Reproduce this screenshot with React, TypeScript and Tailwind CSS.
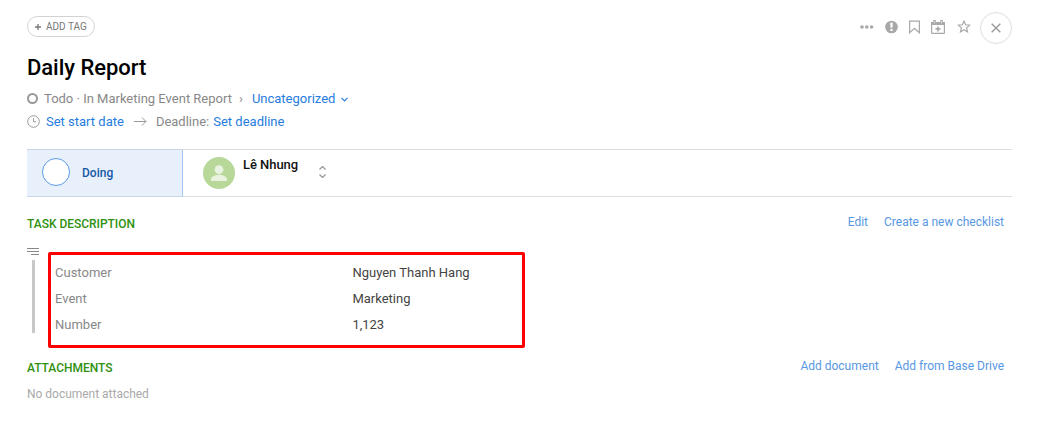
import type { ReactNode } from "react";

const fields = [
    { label: "Customer", value: "Nguyen Thanh Hang" },
    { label: "Event", value: "Marketing" },
    { label: "Number", value: "1,123" },
];

function Actions() {
    return (
        <div className="flex h-8 items-center text-[#a8a8a8]">
            <svg
                className="mb-0.5"
                width="14"
                height="4"
                viewBox="0 0 14 4"
                fill="currentColor"
            >
                <circle cx="2" cy="2" r="1.8" />
                <circle cx="6.8" cy="2" r="1.8" />
                <circle cx="11.6" cy="2" r="1.8" />
            </svg>
            <svg
                className="mb-0.5 ml-[11px]"
                width="13"
                height="14"
                viewBox="0 0 13 14"
            >
                <circle cx="6.5" cy="7" r="6.3" fill="currentColor" />
                <path d="M5.2 2.8h2.6l-.4 5H5.6z" fill="#fff" />
                <rect x="5.4" y="8.9" width="2.2" height="2.1" fill="#fff" />
            </svg>
            <svg
                className="mb-0.5 ml-[11px]"
                width="11"
                height="14"
                viewBox="0 0 11 14"
                fill="none"
                stroke="currentColor"
                strokeWidth="1.2"
            >
                <path d="M.6 1.2h9.8v11.6L5.5 8.3.6 12.8z" />
            </svg>
            <svg
                className="mb-0.5 ml-[11px]"
                width="14"
                height="14"
                viewBox="0 0 14 14"
                fill="none"
                stroke="currentColor"
            >
                <rect
                    x=".6"
                    y="2.6"
                    width="12.8"
                    height="10.8"
                    rx=".6"
                    strokeWidth="1.2"
                />
                <path d="M0 2h14v3H0z" fill="currentColor" stroke="none" />
                <path d="M3.5 0v3.6M10.5 0v3.6" strokeWidth="2.6" />
                <path
                    d="M3.5 1v2.4M10.5 1v2.4"
                    stroke="#fff"
                    strokeWidth=".6"
                />
                <path d="M7 6.4v5M4.5 8.9h5" strokeWidth="1.6" />
            </svg>
            <svg
                className="mb-[3px] ml-3"
                width="14"
                height="13"
                viewBox="0 0 14 13"
                fill="none"
                stroke="currentColor"
                strokeWidth="1.2"
                strokeLinejoin="miter"
            >
                <path d="M7 1.2l1.6 3.6 4.1.4-3.1 2.7.9 4L7 9.8l-3.5 2.1.9-4-3.1-2.7 4.1-.4z" />
            </svg>
            <button className="ml-[9px] flex size-8 items-center justify-center rounded-full border border-[#dedede]">
                <svg
                    width="10"
                    height="10"
                    viewBox="0 0 10 10"
                    stroke="#999"
                    strokeWidth="1.4"
                >
                    <path d="M.7.7l8.6 8.6M9.3.7L.7 9.3" />
                </svg>
            </button>
        </div>
    );
}

function SectionHeading({
    title,
    children,
}: {
    title: string;
    children: ReactNode;
}) {
    return (
        <div className="flex h-[23px] items-center justify-between pr-2">
            <h2 className="text-[12px] font-medium tracking-[-0.03px] text-[#2f910f]">
                {title}
            </h2>
            <div className="-mt-[3px] flex gap-4 text-[12px] text-[#5897e2]">
                {children}
            </div>
        </div>
    );
}

export default function App() {
    return (
        <main className="h-[426px] w-[1038px] overflow-hidden bg-white pt-3 pr-[26px] pl-[27px] font-['Roboto',sans-serif] text-[13px] text-[#888]">
            <header className="flex items-start justify-between">
                <button className="mt-1 flex h-[21px] w-[68px] items-center rounded-full border border-[#d2d2d2] pl-[7px] text-[10px] text-[#777]">
                    <svg
                        className="mr-[5px]"
                        width="6"
                        height="6"
                        viewBox="0 0 6 6"
                        stroke="#777"
                        strokeWidth="1.3"
                    >
                        <path d="M3 0v6M0 3h6" />
                    </svg>
                    ADD TAG
                </button>
                <Actions />
            </header>

            <h1 className="mt-[9px] h-[30px] text-[22px] leading-[30px] font-medium tracking-[-0.05px] text-black">
                Daily Report
            </h1>

            <div className="mt-1 flex h-[23px] items-center">
                <span className="mr-1.5 size-[11px] rounded-full border-2 border-[#999]" />
                <span>Todo · In Marketing Event Report</span>
                <span className="ml-[7px]">›</span>
                <a className="ml-[9px] text-[#267cde]">Uncategorized</a>
                <svg
                    className="mt-0.5 ml-1.5"
                    width="7"
                    height="5"
                    viewBox="0 0 7 5"
                    fill="none"
                    stroke="#267cde"
                    strokeWidth="1.2"
                >
                    <path d="M.5.8l3 3 3-3" />
                </svg>
            </div>
            <div className="flex h-[23px] items-center">
                <svg
                    className="mr-1.5"
                    width="13"
                    height="13"
                    viewBox="0 0 13 13"
                    fill="none"
                    stroke="#999"
                >
                    <circle cx="6.5" cy="6.5" r="5.8" />
                    <path d="M6.5 3.2v3.6H9" />
                </svg>
                <a className="text-[#267cde]">Set start date</a>
                <svg
                    className="ml-2.5"
                    width="13"
                    height="9"
                    viewBox="0 0 13 9"
                    fill="none"
                    stroke="#999"
                >
                    <path d="M0 4.5h12M8 .5l4 4-4 4" />
                </svg>
                <span className="ml-[9px]">Deadline:</span>
                <a className="ml-1 text-[#267cde]">Set deadline</a>
            </div>

            <div className="mt-4 flex h-12 border-y border-[#dedede]">
                <div className="-my-px flex w-[156px] items-center border-y border-r border-[#c8d5e8] border-r-[#a5c8f0] bg-[#e8f0fc] pl-[15px] text-[12px] font-medium text-[#1658a5]">
                    <span className="mr-3 -mt-0.5 size-7 rounded-full border border-[#5b9ae8] bg-white" />
                    Doing
                </div>
                <div className="flex items-center pl-5">
                    <svg width="32" height="32" viewBox="0 0 32 32">
                        <circle cx="16" cy="16" r="16" fill="#b8d89a" />
                        <circle cx="16" cy="12.6" r="4.4" fill="#e8f2de" />
                        <path
                            d="M8 24v-1.6c0-3 4.6-4.6 8-4.6s8 1.6 8 4.6V24z"
                            fill="#e8f2de"
                        />
                    </svg>
                    <span className="mb-4 ml-2 font-medium tracking-[-0.05px] text-[#111]">
                        Lê Nhung
                    </span>
                    <svg
                        className="mb-0.5 ml-[21px]"
                        width="7"
                        height="12"
                        viewBox="0 0 7 12"
                        fill="none"
                        stroke="#999"
                        strokeWidth="1.3"
                    >
                        <path d="M.5 3.5l3-3 3 3M.5 8.5l3 3 3-3" />
                    </svg>
                </div>
            </div>

            <section className="mt-[15px]">
                <SectionHeading title="TASK DESCRIPTION">
                    <a>Edit</a>
                    <a>Create a new checklist</a>
                </SectionHeading>
                <div className="flex">
                    <div className="w-[21px] pt-[13px]">
                        <div className="flex w-3 flex-col items-end gap-0.5">
                            <span className="h-px w-3 bg-[#888]" />
                            <span className="h-px w-3 bg-[#888]" />
                            <span className="h-px w-2 bg-[#888]" />
                        </div>
                        <div className="mt-[5px] ml-[5px] h-[73px] w-[3px] bg-[#c8c8c8]" />
                    </div>
                    <div className="mt-[17px] h-24 w-[477px] rounded-[2px] border-3 border-[#fe0000] pt-[5px] pl-1">
                        {fields.map((field) => (
                            <div
                                className="flex h-[26px] items-center"
                                key={field.label}
                            >
                                <span className="w-[297.4px]">
                                    {field.label}
                                </span>
                                <span className="text-[#444]">
                                    {field.value}
                                </span>
                            </div>
                        ))}
                    </div>
                </div>
            </section>

            <section className="mt-2">
                <SectionHeading title="ATTACHMENTS">
                    <a>Add document</a>
                    <a>Add from Base Drive</a>
                </SectionHeading>
                <p className="mt-[5px] text-[12px] leading-5 tracking-[-0.02px] text-[#aaa]">
                    No document attached
                </p>
            </section>
        </main>
    );
}
